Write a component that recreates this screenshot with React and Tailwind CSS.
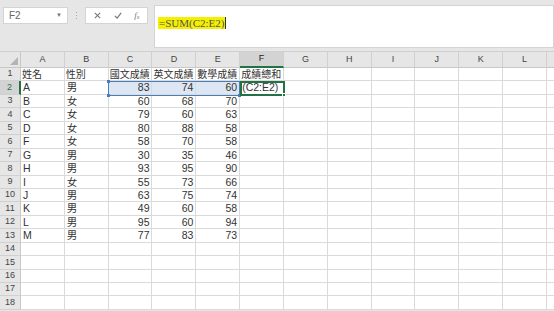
import React from 'react';

const cols = ['A', 'B', 'C', 'D', 'E', 'F', 'G', 'H', 'I', 'J', 'K', 'L', 'M'];

const rows = [
  ['姓名', '性別', '國文成績', '英文成績', '數學成績', '成績總和'],
  ['A', '男', 83, 74, 60, '(C2:E2)'],
  ['B', '女', 60, 68, 70],
  ['C', '女', 79, 60, 63],
  ['D', '女', 80, 88, 58],
  ['F', '女', 58, 70, 58],
  ['G', '男', 30, 35, 46],
  ['H', '男', 93, 95, 90],
  ['I', '女', 55, 73, 66],
  ['J', '男', 63, 75, 74],
  ['K', '男', 49, 60, 58],
  ['L', '男', 95, 60, 94],
  ['M', '男', 77, 83, 73],
];

const font = { fontFamily: '"Liberation Sans", "Noto Sans CJK TC", sans-serif' };

function Cell({ value, row, col }) {
  const isNum = typeof value === 'number';
  const inSel = row === 1 && col >= 2 && col <= 4;
  return (
    <div
      className={
        'border-r border-b border-[#dadada] leading-[13px] text-[#333] whitespace-nowrap overflow-visible ' +
        (row === 0 ? 'text-[10px] px-[1px] ' : 'text-[10.5px] px-[2px] ') +
        (isNum ? 'text-right ' : 'text-left ') +
        (inSel ? 'bg-[#dde7f3]' : 'bg-white')
      }
    >
      {value ?? ''}
    </div>
  );
}

export default function App() {
  const allRows = Array.from({ length: 18 }, (_, i) => rows[i] || []);

  return (
    <div className="w-[554px] h-[311px] overflow-hidden bg-[#e6e6e6]" style={font}>
      {/* formula bar area */}
      <div className="h-[52px] flex items-start pt-[5px] pl-[3px] border-b border-[#d0d0d0]">
        <div className="w-[65px] h-[17px] mt-[2px] bg-white border border-[#d4d4d4] flex items-center justify-between px-[5px]">
          <span className="text-[10px] text-[#666]">F2</span>
          <span className="text-[6px] text-[#777]">▼</span>
        </div>
        <div className="w-[17px] flex flex-col items-center gap-[2px] mt-[7px]">
          <span className="w-[1px] h-[1px] bg-[#aaa]" />
          <span className="w-[1px] h-[1px] bg-[#aaa]" />
          <span className="w-[1px] h-[1px] bg-[#aaa]" />
        </div>
        <div className="w-[63px] h-[17px] mt-[2px] bg-white border border-[#d4d4d4] flex items-center justify-around px-[2px] text-[#777]">
          <svg width="9" height="9" viewBox="0 0 10 10"><path d="M2 2L8 8M8 2L2 8" stroke="#777" strokeWidth="1.2" /></svg>
          <svg width="10" height="9" viewBox="0 0 10 10"><path d="M1.5 5.5L4 8L8.5 2" stroke="#777" strokeWidth="1.3" fill="none" /></svg>
          <span className="text-[9px] italic" style={{ fontFamily: '"Liberation Serif", serif' }}>f<sub className="text-[6px]">x</sub></span>
        </div>
        <div className="ml-[6px] flex-1 h-[43px] bg-white border border-[#d4d4d4] pl-[3px] pt-[4px]">
          <span
            className="bg-[#f5f000] text-[11px] leading-[12px] text-[#555] px-[1px]"
            style={{ fontFamily: '"Liberation Serif", serif' }}
          >
            =SUM(C2:E2)
          </span>
          <span className="inline-block w-[1px] h-[12px] bg-[#333] align-middle" />
        </div>
      </div>

      {/* sheet */}
      <div className="relative">
        <div className="grid grid-cols-[21px_repeat(13,43.83px)] grid-rows-[16px_repeat(18,13.45px)]">
          <div className="bg-[#e6e6e6] border-r border-b border-[#c8c8c8] relative">
            <svg className="absolute right-[2px] bottom-[2px]" width="8" height="8" viewBox="0 0 8 8">
              <path d="M8 0L8 8L0 8Z" fill="#b4b4b4" />
            </svg>
          </div>
          {cols.map((c) => (
            <div
              key={c}
              className={
                'border-r border-[#d0d0d0] flex items-center justify-center text-[9px] ' +
                (c === 'F'
                  ? 'bg-[#d3d3d3] border-b-2 border-b-[#217346] text-[#222]'
                  : 'bg-[#e6e6e6] border-b border-b-[#c8c8c8] text-[#444]')
              }
            >
              {c === 'M' ? '' : c}
            </div>
          ))}
          {allRows.map((r, ri) => (
            <React.Fragment key={ri}>
              <div
                className={
                  'border-b border-[#d0d0d0] flex items-center justify-center text-[9px] ' +
                  (ri === 1
                    ? 'bg-[#d3d3d3] border-r-2 border-r-[#217346] text-[#217346]'
                    : 'bg-[#e6e6e6] border-r border-r-[#c8c8c8] text-[#444]')
                }
              >
                {ri + 1}
              </div>
              {cols.map((c, ci) => (
                <Cell key={c} value={r[ci]} row={ri} col={ci} />
              ))}
            </React.Fragment>
          ))}
        </div>

        {/* selection C2:E2 */}
        <div className="absolute left-[108px] top-[29px] w-[132px] h-[14.5px] border border-[#4a7ebb] pointer-events-none">
          <span className="absolute -left-[2px] -top-[2px] w-[3px] h-[3px] bg-[#4a7ebb]" />
          <span className="absolute -left-[2px] -bottom-[2px] w-[3px] h-[3px] bg-[#4a7ebb]" />
          <span className="absolute -right-[2px] -bottom-[2px] w-[3px] h-[3px] bg-[#4a7ebb]" />
        </div>
        {/* active F2 */}
        <div className="absolute left-[240px] top-[29px] w-[45px] h-[14.5px] border-2 border-[#217346] pointer-events-none">
          <span className="absolute -right-[3px] -bottom-[3px] w-[4px] h-[4px] bg-[#217346] border border-white" />
        </div>
      </div>
    </div>
  );
}
